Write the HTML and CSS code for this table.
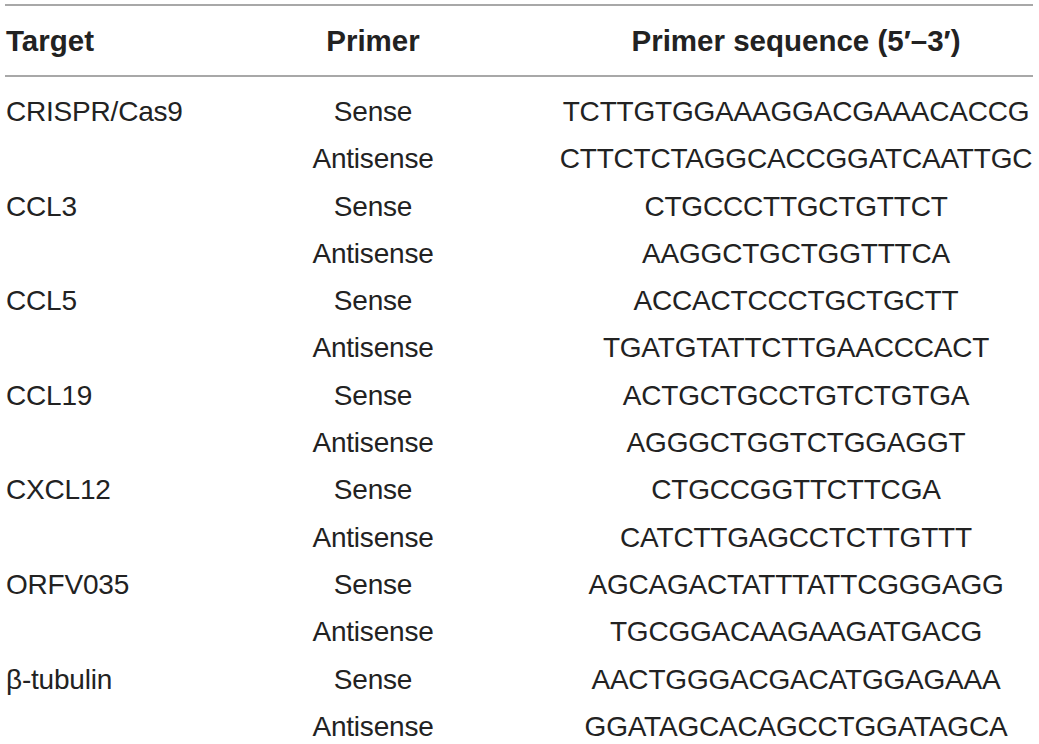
FILE: index.html
```html
<!DOCTYPE html>
<html lang="en">
<head>
<meta charset="utf-8">
<title>Primer sequences</title>
<link rel="stylesheet" href="styles.css">
</head>
<body>
<div class="wrap">
<table class="primers">
<colgroup><col class="c-target"><col class="c-primer"><col class="c-seq"></colgroup>
<thead>
<tr><th class="left">Target</th><th>Primer</th><th>Primer sequence (5′–3′)</th></tr>
</thead>
<tbody>
<tr class="first"><td class="left">CRISPR/Cas9</td><td>Sense</td><td>TCTTGTGGAAAGGACGAAACACCG</td></tr>
<tr><td class="left"></td><td>Antisense</td><td>CTTCTCTAGGCACCGGATCAATTGC</td></tr>
<tr><td class="left">CCL3</td><td>Sense</td><td>CTGCCCTTGCTGTTCT</td></tr>
<tr><td class="left"></td><td>Antisense</td><td>AAGGCTGCTGGTTTCA</td></tr>
<tr><td class="left">CCL5</td><td>Sense</td><td>ACCACTCCCTGCTGCTT</td></tr>
<tr><td class="left"></td><td>Antisense</td><td>TGATGTATTCTTGAACCCACT</td></tr>
<tr><td class="left">CCL19</td><td>Sense</td><td>ACTGCTGCCTGTCTGTGA</td></tr>
<tr><td class="left"></td><td>Antisense</td><td>AGGGCTGGTCTGGAGGT</td></tr>
<tr><td class="left">CXCL12</td><td>Sense</td><td>CTGCCGGTTCTTCGA</td></tr>
<tr><td class="left"></td><td>Antisense</td><td>CATCTTGAGCCTCTTGTTT</td></tr>
<tr><td class="left">ORFV035</td><td>Sense</td><td>AGCAGACTATTTATTCGGGAGG</td></tr>
<tr><td class="left"></td><td>Antisense</td><td>TGCGGACAAGAAGATGACG</td></tr>
<tr><td class="left">β-tubulin</td><td>Sense</td><td>AACTGGGACGACATGGAGAAA</td></tr>
<tr><td class="left"></td><td>Antisense</td><td>GGATAGCACAGCCTGGATAGCA</td></tr>
</tbody>
</table>
</div>
</body>
</html>
```
FILE: styles.css
```css
html, body {
  margin: 0;
  padding: 0;
  background: #ffffff;
}

.wrap {
  padding: 4px 6px 0 5px;
}

.primers {
  width: 1028px;
  border-collapse: collapse;
  table-layout: fixed;
  font-family: "Liberation Sans", Arial, Helvetica, sans-serif;
  color: #222222;
  font-size: 28px;
  border-top: 2px solid #a8a8a8;
}

.c-target { width: 182px; }
.c-primer { width: 372px; }
.c-seq { width: 474px; }

.primers th {
  font-weight: bold;
  font-size: 29.5px;
  height: 68px;
  line-height: 68px;
  padding: 1px 0 0 0;
  text-align: center;
  white-space: nowrap;
  border-bottom: 2px solid #a8a8a8;
}

.primers td {
  padding: 0;
  height: 47.3px;
  line-height: 47.3px;
  text-align: center;
  white-space: nowrap;
  letter-spacing: -0.2px;
}

.primers tr.first td {
  padding-top: 11px;
}

.primers .left {
  text-align: left;
  padding-left: 1px;
}
```
